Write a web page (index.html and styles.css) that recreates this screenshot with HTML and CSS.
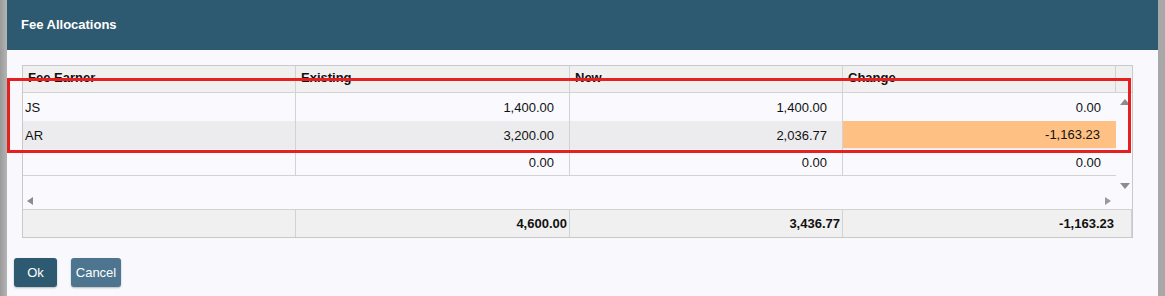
FILE: index.html
```html
<!DOCTYPE html>
<html>
<head>
<meta charset="utf-8">
<link rel="stylesheet" href="styles.css">
</head>
<body>
<div class="dialog">
  <div class="titlebar">Fee Allocations</div>
  <div class="content">
    <div class="grid">
      <div class="row head">
        <div class="cell c1">Fee Earner</div>
        <div class="cell c2">Existing</div>
        <div class="cell c3">New</div>
        <div class="cell c4">Change</div>
        <div class="cell sb"></div>
      </div>
      <div class="middle">
        <div class="rows">
          <div class="row data">
            <div class="cell c1 txt">JS</div>
            <div class="cell c2 num">1,400.00</div>
            <div class="cell c3 num">1,400.00</div>
            <div class="cell c4 num">0.00</div>
          </div>
          <div class="row data alt">
            <div class="cell c1 txt">AR</div>
            <div class="cell c2 num">3,200.00</div>
            <div class="cell c3 num">2,036.77</div>
            <div class="cell c4 num hl">-1,163.23</div>
          </div>
          <div class="row data last">
            <div class="cell c1 txt"></div>
            <div class="cell c2 num">0.00</div>
            <div class="cell c3 num">0.00</div>
            <div class="cell c4 num">0.00</div>
          </div>
          <div class="hscroll">
            <span class="arr left"></span>
            <span class="arr right"></span>
          </div>
        </div>
        <div class="vscroll">
          <span class="arr up"></span>
          <span class="arr down"></span>
        </div>
      </div>
      <div class="row foot">
        <div class="cell c1"></div>
        <div class="cell c2 num">4,600.00</div>
        <div class="cell c3 num">3,436.77</div>
        <div class="cell c4w num">-1,163.23</div>
      </div>
    </div>
    <div class="buttons">
      <button class="btn ok">Ok</button>
      <button class="btn cancel">Cancel</button>
    </div>
  </div>
</div>
<div class="annot"></div>
</body>
</html>
```

FILE: styles.css
```css
html, body {
  margin: 0;
  padding: 0;
}
body {
  width: 1165px;
  height: 296px;
  overflow: hidden;
  background: linear-gradient(to right, #9a9a9a 0, #b4b4b4 7px, #a8a8a8 7px);
  font-family: "Liberation Sans", Arial, sans-serif;
  font-size: 13px;
  color: #111;
  position: relative;
}
.dialog {
  margin-left: 7px;
  width: 1151px;
  height: 296px;
  background: #f9f9fd;
  display: flex;
  flex-direction: column;
}
.titlebar {
  height: 50px;
  background: #2e5a71;
  color: #fff;
  font-weight: bold;
  font-size: 13px;
  display: flex;
  align-items: center;
  padding-left: 14px;
  box-sizing: border-box;
  padding-bottom: 1px;
}
.content {
  padding: 15px 0 0 15px;
}
.grid {
  width: 1111px;
  border: 1px solid #c9c9c9;
  box-sizing: border-box;
  background: #fafafe;
}
.row {
  display: flex;
}
.cell {
  box-sizing: border-box;
  border-right: 1px solid #d2d2d2;
  height: 100%;
}
.c1 { width: 273px; }
.c2 { width: 274px; }
.c3 { width: 273px; }
.c4 { width: 273px; }
.sb { width: 16px; border-right: none; }
.c4w { width: 289px; }

.head {
  height: 27px;
  background: #f0f0f0;
  border-bottom: 1px solid #d2d2d2;
  box-sizing: border-box;
  font-weight: bold;
}
.head .cell {
  padding: 4px 0 0 5px;
}
.middle {
  display: flex;
  height: 116px;
}
.rows {
  width: 1093px;
  display: flex;
  flex-direction: column;
}
.data {
  height: 28px;
}
.data.alt {
  background: #ececef;
}
.data.last {
  height: 27px;
  border-bottom: 1px solid #d2d2d2;
  box-sizing: border-box;
}
.data .cell {
  display: flex;
  align-items: center;
}
.txt {
  padding-left: 2px;
}
.num {
  justify-content: flex-end;
  padding-right: 15px;
}
.data .c4 {
  border-right: none;
}
.hl {
  background: #fec083;
  height: 27px;
  padding-right: 16px;
}
.hscroll {
  flex: 1;
  display: flex;
  justify-content: space-between;
  align-items: flex-end;
  padding: 0 5px 4px 4px;
}
.vscroll {
  width: 16px;
  display: flex;
  flex-direction: column;
  justify-content: space-between;
  align-items: center;
  padding: 6px 0 20px 1px;
  box-sizing: border-box;
}
.arr {
  width: 0;
  height: 0;
  display: block;
}
.arr.left {
  border-top: 4px solid transparent;
  border-bottom: 4px solid transparent;
  border-right: 6px solid #8c8c8c;
}
.arr.right {
  border-top: 4px solid transparent;
  border-bottom: 4px solid transparent;
  border-left: 6px solid #9a9a9a;
}
.arr.up {
  border-left: 5px solid transparent;
  border-right: 5px solid transparent;
  border-bottom: 6px solid #8c8c8c;
}
.arr.down {
  border-left: 5px solid transparent;
  border-right: 5px solid transparent;
  border-top: 6px solid #8c8c8c;
}
.foot {
  height: 27px;
  background: #f0f0f0;
  border-top: 1px solid #d2d2d2;
  box-sizing: content-box;
  font-weight: bold;
}
.foot .cell, .foot .c4w {
  display: flex;
  align-items: center;
  box-sizing: border-box;
}
.foot .num {
  padding-right: 2px;
}
.foot .c4w {
  padding-right: 17px;
  justify-content: flex-end;
}
.buttons {
  display: flex;
  gap: 14px;
  margin-top: 20px;
  margin-left: -8px;
}
.btn {
  font-family: "Liberation Sans", Arial, sans-serif;
  font-size: 13px;
  color: #fff;
  border: none;
  border-radius: 3px;
  height: 29px;
  padding: 0;
  box-shadow: 0 1px 2px rgba(0,0,0,0.25);
}
.ok {
  width: 43px;
  background: #2e5a71;
}
.cancel {
  width: 50px;
  background: #4e7590;
}
.annot {
  position: absolute;
  left: 7px;
  top: 78px;
  width: 1124px;
  height: 75px;
  border: 3px solid #e5201f;
  box-sizing: border-box;
}
```
